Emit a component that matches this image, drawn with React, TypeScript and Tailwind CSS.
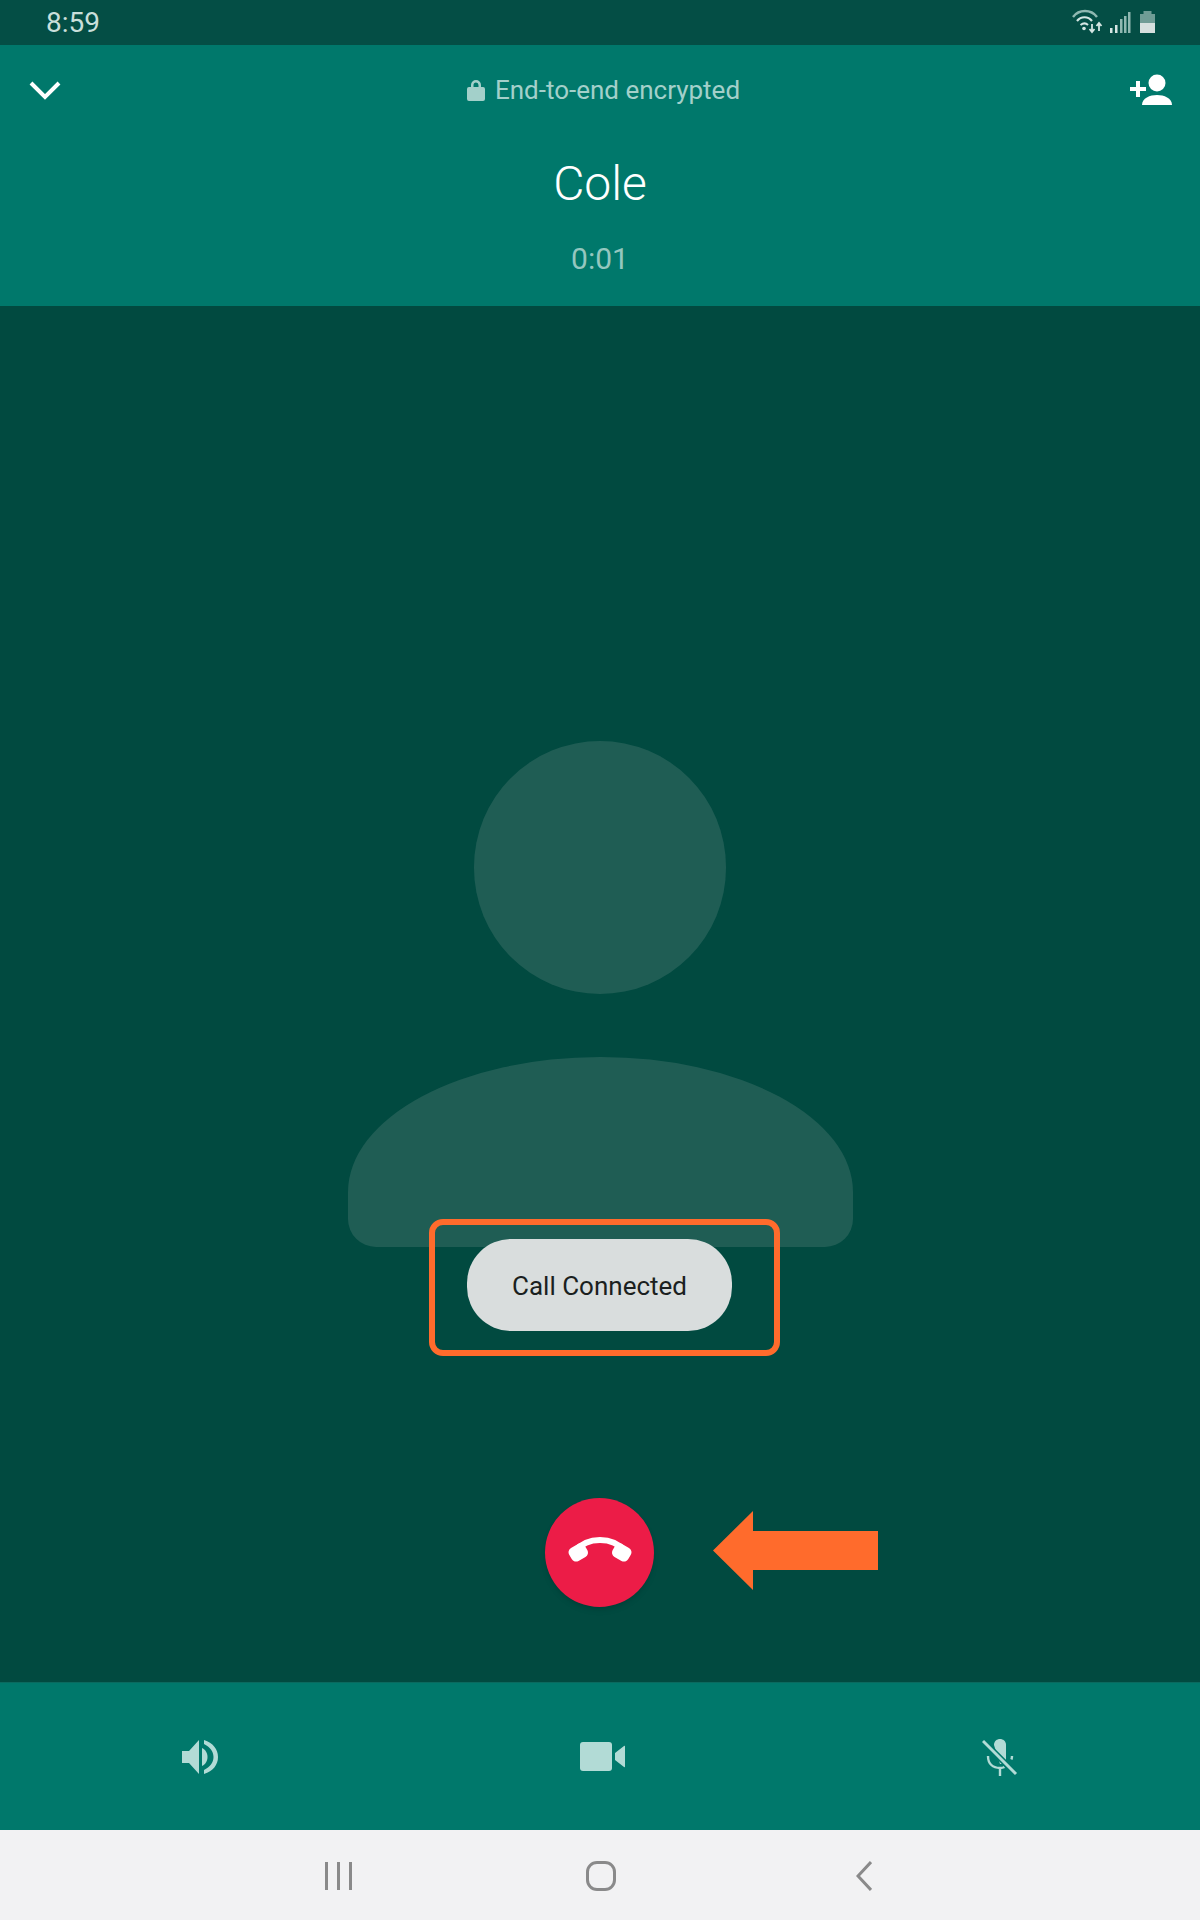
const roboto = { fontFamily: "Roboto, sans-serif" };

function StatusIcons() {
    return (
        <svg width="84" height="45" viewBox="0 0 84 45" fill="none">
            {/* wifi */}
            <path d="M1 17C7 9 19 9 25 17" stroke="#8fb8b1" strokeWidth="2.4" />
            <path d="M5 21C9 16 16 16 20 21" stroke="#d5e6e3" strokeWidth="2.2" />
            <path d="M8.500 25C11 23 14 23 16 25" stroke="#d5e6e3" strokeWidth="2" />
            <circle cx="12" cy="28.500" r="1.800" fill="#d5e6e3" />
            <path d="M20 24v7M17.500 29l2.500 3 2.500-3" stroke="#d5e6e3" strokeWidth="1.800" />
            <path d="M27 31v-7M24.500 26l2.500-3 2.500 3" stroke="#d5e6e3" strokeWidth="1.800" />
            {/* signal */}
            <rect x="38" y="28" width="2.500" height="5" fill="#d5e6e3" />
            <rect x="43" y="25" width="2.500" height="8" fill="#d5e6e3" />
            <rect x="48" y="19" width="2.500" height="14" fill="#8fb8b1" />
            <rect x="52" y="16" width="2.500" height="17" fill="#8fb8b1" />
            <rect x="56" y="12" width="2.500" height="21" fill="#8fb8b1" />
            {/* battery */}
            <rect x="68" y="14" width="15" height="9" fill="#6f9c95" />
            <rect x="71.500" y="11" width="8" height="3" fill="#6f9c95" />
            <rect x="68" y="23" width="15" height="10" fill="#d5e0de" />
        </svg>
    );
}

function Speaker() {
    return (
        <svg width="36" height="36" viewBox="0 0 36 36" fill="#b2dbd6">
            <path d="M0 12h7L17 1v34L7 24H0z" />
            <path d="M20 9c4 2 5.500 5.500 5.500 9s-1.500 7-5.500 9z" />
            <path d="M22 1c9 3 14 9 14 17s-5 14-14 17v-4c6-3 9.500-7.500 9.500-13S28 8 22 5z" />
        </svg>
    );
}

function Video() {
    return (
        <svg width="46" height="30" viewBox="0 0 46 30" fill="#b2dbd6" className="ml-[6px]">
            <rect x="0" y="0" width="32" height="29" rx="3" />
            <path d="M35 11l9-7c.5-.4 1-.2 1 .5v20c0 .7-.5.900-1 .5l-9-7z" />
        </svg>
    );
}

function MicOff() {
    return (
        <svg width="36" height="38" viewBox="0 0 36 38" fill="none" stroke="#b2dbd6" className="ml-[-1px]">
            <path d="M12 7c0-8 12-8 12 0v14c0 3-2 5-6 5z" fill="#b2dbd6" stroke="none" />
            <path d="M6 18c0 8 5 12 12 12 1.500 0 3-.2 4.500-1" strokeWidth="2.400" />
            <path d="M30 18c0 1.500-.2 2.500-.6 3.500" strokeWidth="2.400" />
            <path d="M18 30v8" strokeWidth="2.400" />
            <path d="M1 3l33 33" stroke="#00786b" strokeWidth="6" />
            <path d="M1 3l33 33" strokeWidth="3" />
        </svg>
    );
}

function HangUp() {
    return (
        <svg width="66" height="25" viewBox="0 0 66 25" fill="#ffffff">
            <path d="M8 14C15 6 24 3 33 3s18 3 25 11" fill="none" stroke="#ffffff" strokeWidth="6" />
            <rect x="2" y="8" width="18" height="15" rx="5" transform="rotate(-30 11 15)" />
            <rect x="46" y="8" width="18" height="15" rx="5" transform="rotate(30 55 15)" />
        </svg>
    );
}

export default function App() {
    return (
        <div className="w-[1200px] h-[1920px] flex flex-col overflow-hidden bg-[#014a40]" style={roboto}>
            {/* Status bar */}
            <div className="h-[45px] bg-[#044e45] flex items-center justify-between pl-[46px] pr-[44px]">
                <span className="text-[28px] leading-[45px] text-[#c9dfdb]">8:59</span>
                <StatusIcons />
            </div>

            {/* Header */}
            <div className="relative h-[261px] bg-[#00786b] flex flex-col items-center shrink-0">
                <div className="w-full h-[90px] flex items-center justify-between pl-[29px] pr-[28px]">
                    <svg width="32" height="20" viewBox="0 0 32 20" fill="none" stroke="#ffffff" strokeWidth="4">
                        <path d="M2 3l14 14L30 3" />
                    </svg>
                    <div className="flex items-center gap-[10px] text-[26px] text-[#a3d0ca] ml-[16px]">
                        <svg width="18" height="22" viewBox="0 0 18 22" fill="#a3d0ca">
                            <path d="M4 8V6a5 5 0 0110 0v2h2a2 2 0 012 2v10a2 2 0 01-2 2H2a2 2 0 01-2-2V10a2 2 0 012-2zm2.500 0h5V6a2.500 2.500 0 00-5 0z" />
                        </svg>
                        <span>End-to-end encrypted</span>
                    </div>
                    <svg width="42" height="32" viewBox="0 0 42 32" fill="#ffffff">
                        <circle cx="27" cy="9" r="8.500" />
                        <path d="M12 31c0-7 8-10 15-10s15 3 15 10z" />
                        <path d="M6 7h4v6h6v4h-6v6H6v-6H0v-4h6z" />
                    </svg>
                </div>
                <div className="mt-[21px] text-[48px] leading-[56px] font-light text-white">Cole</div>
                <div className="mt-[29px] text-[30px] leading-[36px] text-[#94c7bf]">0:01</div>
            </div>

            {/* Call area */}
            <div className="relative flex-1 flex flex-col items-center pt-[435px] bg-[#014a40]">
                <div className="w-[252px] h-[253px] rounded-full bg-[#1f5d54]" />
                <div className="mt-[63px] w-[505px] h-[190px] bg-[#1f5d54] rounded-t-[252px_135px] rounded-b-[28px]" />
                <div className="relative mt-[-8px] ml-[-1px] w-[265px] h-[92px] flex items-center justify-center pt-[2px] rounded-[44px] bg-[#d9dddd] text-[26px] text-[#1b1f20]">
                    Call Connected
                </div>
                <div className="mt-[167px] ml-[-1px] w-[109px] h-[109px] rounded-full bg-[#ec1c47] shadow-md flex items-center justify-center pb-[6px]">
                    <HangUp />
                </div>

                {/* Annotations */}
                <div className="absolute left-[429px] top-[913px] w-[351px] h-[137px] border-[6px] border-[#ff6b2c] rounded-[14px]" />
                <svg className="absolute left-[713px] top-[1205px]" width="165" height="79" viewBox="0 0 165 79" fill="#ff6b2c">
                    <path d="M0 39.500L40 0v20h125v39H40v20z" />
                </svg>
            </div>

            {/* Call controls */}
            <div className="h-[148px] shrink-0 bg-[#00786b] grid grid-cols-3 items-center border-t border-[#0a6a5f]">
                <div className="flex justify-center"><Speaker /></div>
                <div className="flex justify-center"><Video /></div>
                <div className="flex justify-center"><MicOff /></div>
            </div>

            {/* Navigation bar */}
            <div className="h-[90px] shrink-0 bg-[#f2f2f3] flex items-center justify-center pl-[2px] pt-[2px]">
                <div className="w-[263px] flex justify-center gap-[9px]">
                    <div className="w-[3px] h-[28px] bg-[#8a8a8a]" />
                    <div className="w-[3px] h-[28px] bg-[#8a8a8a]" />
                    <div className="w-[3px] h-[28px] bg-[#8a8a8a]" />
                </div>
                <div className="w-[263px] flex justify-center">
                    <div className="w-[30px] h-[30px] border-[3px] border-[#8a8a8a] rounded-[11px]" />
                </div>
                <div className="w-[263px] flex justify-center">
                    <svg width="16" height="30" viewBox="0 0 16 30" fill="none" stroke="#8a8a8a" strokeWidth="3">
                        <path d="M15 1L2 15l13 14" />
                    </svg>
                </div>
            </div>
        </div>
    );
}
